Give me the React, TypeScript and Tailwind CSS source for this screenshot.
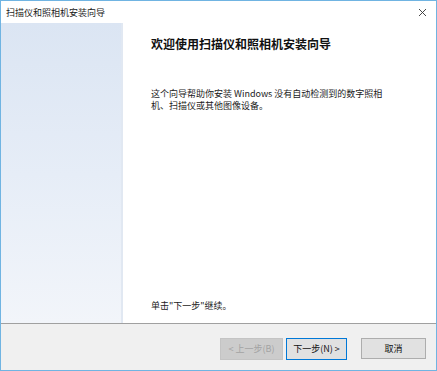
export default function App() {
  const font = { fontFamily: '"Noto Sans CJK SC", "Noto Sans", sans-serif' };
  return (
    <div
      className="w-[437px] h-[371px] flex flex-col border border-[#70b4e2] bg-white text-black overflow-hidden"
      style={font}
    >
      {/* title bar */}
      <div className="h-[22px] flex items-center justify-between pl-[5px] pr-[9px] bg-white">
        <span className="text-[9px] leading-none text-[#1a1a1a]">扫描仪和照相机安装向导</span>
        <svg width="9" height="9" viewBox="0 0 9 9" className="mt-[1px]">
          <path d="M1 1L8 8M8 1L1 8" stroke="#333" strokeWidth="0.9" />
        </svg>
      </div>

      {/* body */}
      <div className="flex-1 flex min-h-0">
        <div className="w-[122px] bg-gradient-to-b from-[#dbe5f3] via-[#e6edf7] to-[#f2f5fa] border-r-2 border-[#e1e8f2]" />
        <div className="flex-1 flex flex-col pl-[28px] pt-[13px] pb-[11px]">
          <h1 className="text-[12px] leading-[16px] font-bold text-[#111]">欢迎使用扫描仪和照相机安装向导</h1>
          <p className="mt-[36px] text-[9px] leading-[12px] text-[#1a1a1a]">
            这个向导帮助你安装 Windows 没有自动检测到的数字照相
            <br />
            机、扫描仪或其他图像设备。
          </p>
          <p className="mt-auto text-[9px] leading-[12px] text-[#1a1a1a]">单击"下一步"继续。</p>
        </div>
      </div>

      {/* footer */}
      <div className="h-[47px] border-t border-[#a0a0a0] bg-[#f0f0f0] flex justify-end items-start pt-[14px] pr-[10px]">
        <button className="w-[63px] h-[22px] bg-[#cccccc] border border-[#c4c4c4] text-[9px] text-[#a3a3a3]">
          {'<  上一步(B)'}
        </button>
        <button className="ml-[3px] w-[61px] h-[22px] bg-[#e1e1e1] border border-[#0078d7] text-[9px] text-[#111]">
          {'下一步(N)  >'}
        </button>
        <button className="ml-[14px] w-[65px] h-[21px] bg-[#e1e1e1] border border-[#adadad] text-[9px] text-[#111]">
          取消
        </button>
      </div>
    </div>
  );
}
